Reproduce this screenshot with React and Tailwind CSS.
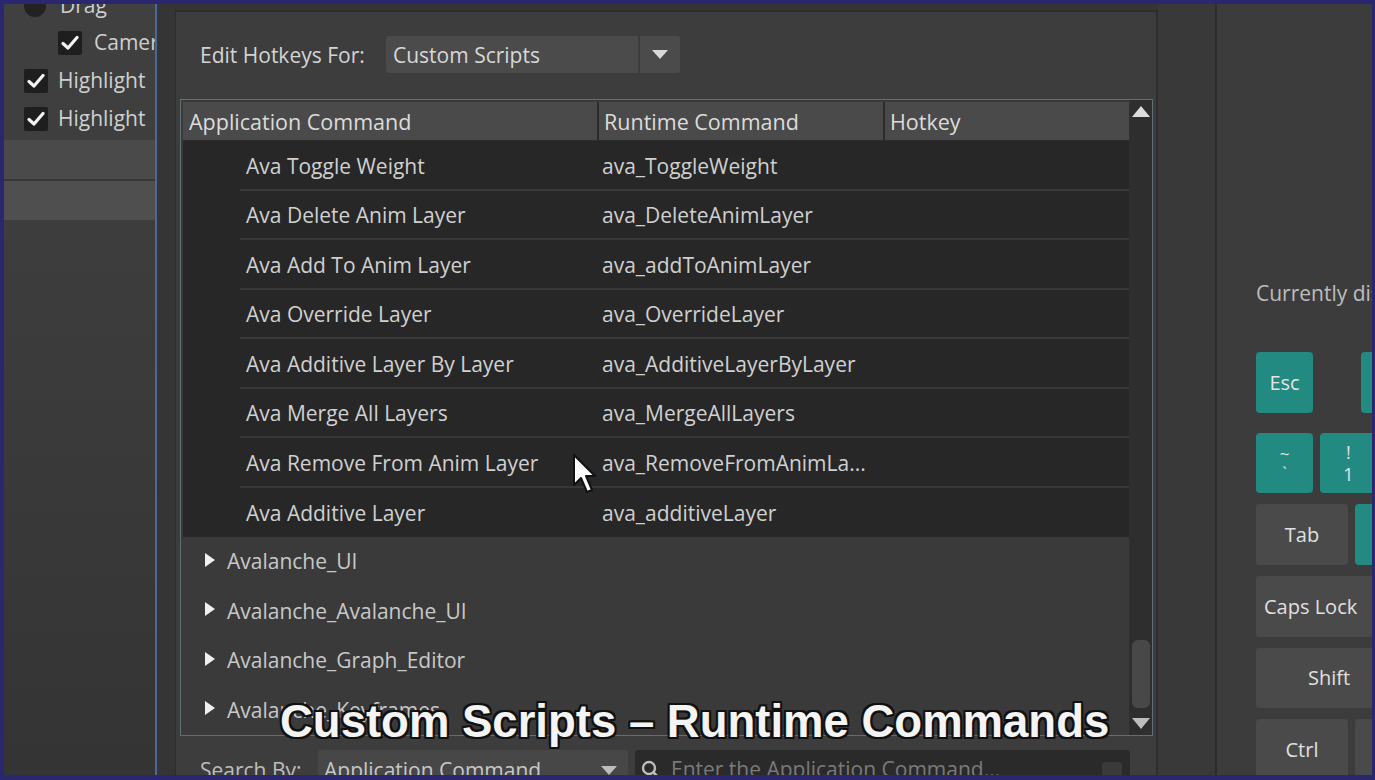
import React from "react";

const rows = [
  ["Ava Toggle Weight", "ava_ToggleWeight"],
  ["Ava Delete Anim Layer", "ava_DeleteAnimLayer"],
  ["Ava Add To Anim Layer", "ava_addToAnimLayer"],
  ["Ava Override Layer", "ava_OverrideLayer"],
  ["Ava Additive Layer By Layer", "ava_AdditiveLayerByLayer"],
  ["Ava Merge All Layers", "ava_MergeAllLayers"],
  ["Ava Remove From Anim Layer", "ava_RemoveFromAnimLa..."],
  ["Ava Additive Layer", "ava_additiveLayer"],
];
const groups = ["Avalanche_UI", "Avalanche_Avalanche_UI", "Avalanche_Graph_Editor", "Avalanche_Keyframes"];

function Check() {
  return (
    <div className="w-[24px] h-[24px] bg-[#1e1e1e] rounded-[2px] flex items-center justify-center shrink-0">
      <svg width="18" height="16" viewBox="0 0 18 16">
        <path d="M2 8.5 L7 13 L16 2.5" fill="none" stroke="#f2f2f2" strokeWidth="3.2" strokeLinecap="round" strokeLinejoin="round" />
      </svg>
    </div>
  );
}

function DownTri({ w = 16, h = 9, color = "#d8d8d8" }) {
  return (
    <svg width={w} height={h} viewBox="0 0 16 9">
      <path d="M0 0 L16 0 L8 9 Z" fill={color} />
    </svg>
  );
}

export default function App() {
  return (
    <div className="relative w-[1375px] h-[780px] overflow-hidden bg-[#2a2770] pt-[4px] pl-[4px] pr-[3px] pb-[5px] flex font-['Open_Sans',sans-serif] font-medium text-[#cfcfcf]">
      {/* Left panel */}
      <div className="w-[151px] h-full overflow-hidden flex flex-col bg-[linear-gradient(#404040,#3c3c3c_40%,#343434)]">
        <div className="-mt-[17px] flex flex-col">
          <div className="h-[37px] flex items-center gap-[14px] pl-[20px]">
            <div className="w-[22px] h-[22px] rounded-full bg-[#222]" />
            <span className="text-[21px] whitespace-nowrap">Drag</span>
          </div>
          <div className="h-[38px] flex items-center gap-[12px] pl-[54px]">
            <Check />
            <span className="text-[21px] whitespace-nowrap">Camera</span>
          </div>
          <div className="h-[38px] flex items-center gap-[10px] pl-[20px]">
            <Check />
            <span className="text-[21px] whitespace-nowrap">Highlight</span>
          </div>
          <div className="h-[37px] flex items-center gap-[10px] pl-[20px]">
            <Check />
            <span className="text-[21px] whitespace-nowrap">Highlight</span>
          </div>
        </div>
        <div className="mt-[3px] h-[41px] bg-[#4a4a4a] border-b-[2px] border-[#363636]" />
        <div className="h-[39px] bg-[#4f4f4f]" />
      </div>
      <div className="w-[2px] h-full bg-[#4a6a95]" />
      {/* gap column */}
      <div className="w-[18px] h-full bg-[#353535]" />
      {/* Dialog column */}
      <div className="w-[983px] h-full flex flex-col bg-[#353535]">
        <div className="h-[6px]" />
        <div className="flex-1 flex flex-col bg-[#3d3d3d] border-t-[2px] border-l-[1px] border-r-[2px] border-[#2d2d2d] overflow-hidden">
          {/* Edit hotkeys row */}
          <div className="h-[87px] shrink-0 flex items-start pt-[24px] pl-[24px]">
            <span className="text-[21px] leading-[38px] text-[#d4d4d4] w-[186px] whitespace-nowrap">Edit Hotkeys For:</span>
            <div className="w-[294px] h-[37px] flex rounded-[3px] bg-[#4b4b4b] overflow-hidden">
              <div className="flex-1 pl-[7px] text-[21px] leading-[38px] text-[#d8d8d8]">Custom Scripts</div>
              <div className="w-[2px] bg-[#3d3d3d]" />
              <div className="w-[40px] flex items-center justify-center">
                <DownTri />
              </div>
            </div>
          </div>
          {/* Table */}
          <div className="ml-[4px] w-[973px] h-[637px] shrink-0 border border-[#5f7075] flex bg-[#2f2f2f]">
            <div className="flex-1 flex flex-col pt-[2px] pl-[2px] bg-[#3a3a3a]">
              <div className="h-[38px] shrink-0 flex gap-[2px] bg-[#2c2c2c] text-[21.5px] text-[#dcdcdc]">
                <div className="w-[414px] bg-[#4a4a4a] pl-[6px] leading-[39px]">Application Command</div>
                <div className="w-[284px] bg-[#4a4a4a] pl-[5px] leading-[39px]">Runtime Command</div>
                <div className="flex-1 bg-[#4a4a4a] pl-[5px] leading-[39px]">Hotkey</div>
              </div>
              <div className="h-[1px] shrink-0 bg-[#2c2c2c]" />
              <div className="flex flex-col bg-[#272727]">
                {rows.map(([a, b], i) => (
                  <div key={i} className="h-[49.5px] pl-[57px] flex">
                    <div className={"flex-1 flex items-center pt-[3px] text-[21px] text-[#d0d0d0] " + (i < rows.length - 1 ? "border-b-[2px] border-[#383838]" : "")}>
                      <span className="w-[362px] pl-[6px] whitespace-nowrap">{a}</span>
                      <span className="whitespace-nowrap">{b}</span>
                    </div>
                  </div>
                ))}
              </div>
              <div className="flex flex-col">
                {groups.map((g, i) => (
                  <div key={i} className="h-[49.5px] flex items-center pl-[22px] gap-[12px] text-[21px] text-[#c8c8c8]">
                    <svg width="10" height="14" viewBox="0 0 10 14" className="-mt-[4px]">
                      <path d="M0 0 L10 7 L0 14 Z" fill="#f0f0f0" />
                    </svg>
                    <span>{g}</span>
                  </div>
                ))}
              </div>
            </div>
            {/* scrollbar */}
            <div className="w-[22px] flex flex-col items-center bg-[#2e2e2e] ml-[1px]">
              <div className="pt-[6px]">
                <svg width="18" height="11" viewBox="0 0 18 11">
                  <path d="M0 11 L18 11 L9 0 Z" fill="#dcdcdc" />
                </svg>
              </div>
              <div className="flex-1" />
              <div className="w-[18px] h-[68px] rounded-[6px] bg-[#484848]" />
              <div className="pt-[10px] pb-[6px]">
                <svg width="18" height="11" viewBox="0 0 18 11">
                  <path d="M0 0 L18 0 L9 11 Z" fill="#bdbdbd" />
                </svg>
              </div>
            </div>
          </div>
          {/* Search row */}
          <div className="flex items-start pt-[14px] pl-[24px]">
            <span className="text-[21px] leading-[36px] pt-[2px] text-[#bdbdbd] w-[118px]">Search By:</span>
            <div className="w-[310px] h-[36px] flex rounded-[3px] bg-[#474747] overflow-hidden">
              <div className="flex-1 pl-[6px] text-[21px] leading-[36px] pt-[2px] text-[#c8c8c8] whitespace-nowrap">Application Command</div>
              <div className="w-[38px] flex items-center justify-center pt-[4px]">
                <DownTri color="#bdbdbd" />
              </div>
            </div>
            <div className="ml-[7px] w-[495px] h-[36px] rounded-[3px] bg-[#2a2a2a] flex items-center pl-[6px] gap-[10px]">
              <svg width="20" height="22" viewBox="0 0 20 22" className="mt-[6px]">
                <circle cx="8" cy="8" r="6" fill="none" stroke="#bdbdbd" strokeWidth="2.4" />
                <path d="M12.5 12.5 L18 18" stroke="#bdbdbd" strokeWidth="2.6" strokeLinecap="round" />
              </svg>
              <span className="flex-1 text-[21px] leading-[36px] pt-[2px] text-[#7a7a7a] whitespace-nowrap overflow-hidden">Enter the Application Command...</span>
              <div className="w-[20px] h-[20px] mr-[8px] mt-[8px] rounded-[3px] bg-[#3a3a3a]" />
            </div>
          </div>
        </div>
      </div>
      {/* middle column */}
      <div className="w-[57px] h-full bg-[#393939]" />
      <div className="w-[2px] h-full bg-[#2c2c2c]" />
      {/* Right panel */}
      <div className="flex-1 h-full bg-[#3c3c3c] overflow-hidden pl-[39px] pt-[274px] flex flex-col">
        <div className="text-[21px] leading-[30px] text-[#bcbcbc] whitespace-nowrap">Currently displaying</div>
        <div className="mt-[44px] flex flex-col gap-[11px]">
          <div className="flex gap-[48px] h-[61px] shrink-0 mb-[9px]">
            <div className="w-[57px] shrink-0 rounded-[4px] bg-[#228a80] flex items-center justify-center text-[20px] text-[#e4e4e4]">Esc</div>
            <div className="w-[57px] shrink-0 rounded-[4px] bg-[#228a80]" />
          </div>
          <div className="flex gap-[7px] h-[60px] shrink-0">
            <div className="w-[57px] shrink-0 rounded-[4px] bg-[#228a80] flex flex-col items-center justify-center text-[17px] leading-[19px] text-[#e4e4e4]">
              <span>~</span><span>`</span>
            </div>
            <div className="w-[57px] shrink-0 rounded-[4px] bg-[#228a80] flex flex-col items-center justify-center text-[18px] leading-[22px] text-[#e4e4e4]">
              <span>!</span><span>1</span>
            </div>
          </div>
          <div className="flex gap-[7px] h-[61px] shrink-0">
            <div className="w-[92px] shrink-0 rounded-[4px] bg-[#4a4a4a] flex items-center justify-center text-[20px] text-[#e0e0e0]">Tab</div>
            <div className="w-[57px] shrink-0 rounded-[4px] bg-[#228a80]" />
          </div>
          <div className="flex h-[61px] shrink-0">
            <div className="w-[130px] shrink-0 rounded-[4px] bg-[#4a4a4a] flex items-center pl-[8px] text-[20px] text-[#e0e0e0] whitespace-nowrap">Caps Lock</div>
          </div>
          <div className="flex h-[60px] shrink-0">
            <div className="w-[150px] shrink-0 rounded-[4px] bg-[#4a4a4a] flex items-center pl-[52px] text-[20px] text-[#e0e0e0]">Shift</div>
          </div>
          <div className="flex gap-[7px] h-[61px] shrink-0">
            <div className="w-[92px] shrink-0 rounded-[4px] bg-[#4a4a4a] flex items-center justify-center text-[20px] text-[#e0e0e0]">Ctrl</div>
            <div className="w-[57px] shrink-0 rounded-[4px] bg-[#4a4a4a]" />
          </div>
        </div>
      </div>

      {/* mouse cursor */}
      <svg className="absolute left-[571px] top-[452px]" width="26" height="44" viewBox="0 0 26 44">
        <path d="M3 3 L3 33 L10 26 L16 40 L21 38 L15 24 L24 24 Z" fill="#ffffff" stroke="#111" strokeWidth="2" strokeLinejoin="round" />
      </svg>

      {/* subtitle */}
      <div className="absolute left-[280px] top-[694px] font-['Liberation_Sans',Arial,sans-serif] font-bold text-[45.5px] leading-[56px] text-[#f4f4f4] whitespace-nowrap [text-shadow:2px_0_0_#111,-2px_0_0_#111,0_2px_0_#111,0_-2px_0_#111,2px_2px_0_#111,-2px_-2px_0_#111,2px_-2px_0_#111,-2px_2px_0_#111]">
        Custom Scripts – Runtime Commands
      </div>
    </div>
  );
}
